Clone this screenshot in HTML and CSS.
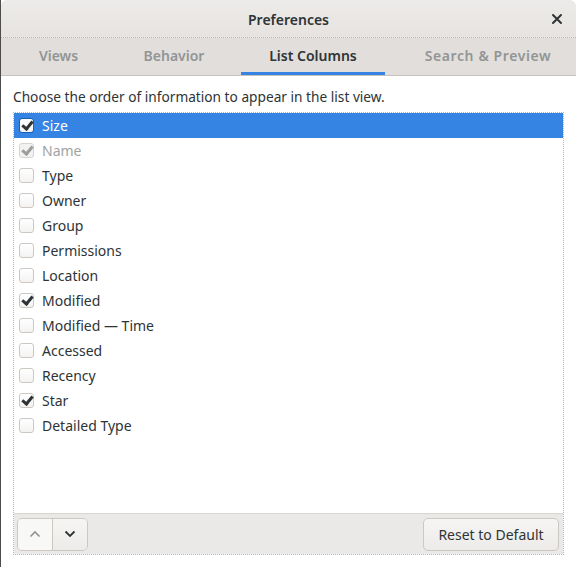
FILE: index.html
```html
<!DOCTYPE html>
<html>
<head>
<meta charset="utf-8">
<link rel="stylesheet" href="styles.css">
</head>
<body>
<div class="window">
  <div class="header">
    <div class="title">Preferences</div>
    <div class="close">
      <svg width="12" height="12" viewBox="0 0 12 12"><path d="M2 2 L10 10 M10 2 L2 10" stroke="#2e3436" stroke-width="2" stroke-linecap="round"/></svg>
    </div>
  </div>
  <div class="tabs">
    <div class="tab t1"><span>Views</span></div>
    <div class="tab t2"><span>Behavior</span></div>
    <div class="tab t3 active"><span>List Columns</span></div>
    <div class="tab t4"><span>Search &amp; Preview</span></div>
  </div>
  <div class="content">
    <div class="intro">Choose the order of information to appear in the list view.</div>
    <div class="frame">
      <div class="list">
        <div class="row selected"><span class="cb checked"></span><span>Size</span></div>
        <div class="row disabled"><span class="cb checked"></span><span>Name</span></div>
        <div class="row"><span class="cb"></span><span>Type</span></div>
        <div class="row"><span class="cb"></span><span>Owner</span></div>
        <div class="row"><span class="cb"></span><span>Group</span></div>
        <div class="row"><span class="cb"></span><span>Permissions</span></div>
        <div class="row"><span class="cb"></span><span>Location</span></div>
        <div class="row"><span class="cb checked"></span><span>Modified</span></div>
        <div class="row"><span class="cb"></span><span>Modified — Time</span></div>
        <div class="row"><span class="cb"></span><span>Accessed</span></div>
        <div class="row"><span class="cb"></span><span>Recency</span></div>
        <div class="row"><span class="cb checked"></span><span>Star</span></div>
        <div class="row"><span class="cb"></span><span>Detailed Type</span></div>
      </div>
      <div class="toolbar">
        <div class="linked">
          <div class="btn icon up"><svg width="12" height="8" viewBox="0 0 12 8"><path d="M1.5 6.5 L6 2 L10.5 6.5" fill="none" stroke="#919494" stroke-width="1.6"/></svg></div>
          <div class="btn icon down"><svg width="12" height="8" viewBox="0 0 12 8"><path d="M1.5 1.5 L6 6 L10.5 1.5" fill="none" stroke="#2e3436" stroke-width="1.8"/></svg></div>
        </div>
        <div class="btn reset">Reset to Default</div>
      </div>
    </div>
  </div>
</div>
</body>
</html>
```
FILE: styles.css
```css
html, body {
  margin: 0;
  padding: 0;
  background: #ffffff;
}
body {
  font-family: "Noto Sans", "DejaVu Sans", sans-serif;
  font-size: 14px;
  color: #2e3436;
  width: 576px;
  height: 567px;
  overflow: hidden;
}
.window {
  height: 567px;
  border-left: 1px solid #4d4d4d;
  box-sizing: border-box;
  display: flex;
  flex-direction: column;
}
.header {
  height: 38px;
  padding-top: 1px;
  box-sizing: border-box;
  background: linear-gradient(#edebe9, #e6e3e0);
  border-bottom: 1px dotted #bfb8b1;
  border-radius: 6px 6px 0 0;
  display: flex;
  align-items: center;
  justify-content: center;
  position: relative;
  flex: none;
}
.title {
  font-weight: 600;
  font-size: 14px;
  color: #2e3436;
}
.close {
  position: absolute;
  right: 13px;
  top: 13px;
  width: 12px;
  height: 12px;
  display: flex;
}
.tabs {
  height: 38px;
  padding-top: 1px;
  box-sizing: border-box;
  background: #e1dedb;
  border-bottom: 1px solid #c6c2bd;
  display: flex;
  flex: none;
}
.tab {
  display: flex;
  justify-content: center;
  font-weight: 600;
  font-size: 14px;
  color: #929595;
  flex: none;
}
.tab span {
  display: flex;
  align-items: center;
  justify-content: center;
  flex: 1;
  box-sizing: border-box;
  border-bottom: 3px solid transparent;
}
.t1 { width: 115px; }
.t2 { width: 116px; }
.t3 { width: 162px; }
.t4 { flex: 1; padding-left: 6px; letter-spacing: 0.6px; }
.t3 span { margin: 0 9px; }
.tab.active { color: #2e3436; }
.tab.active span { border-bottom-color: #3584e4; }
.content {
  flex: 1;
  padding: 11px 12px 0 12px;
  display: flex;
  flex-direction: column;
}
.intro {
  font-size: 13.7px;
  height: 19px;
  line-height: 19px;
  margin-bottom: 6px;
}
.frame {
  border: 1px dotted #b8b4af;
  height: 443px;
  display: flex;
  flex-direction: column;
  box-sizing: border-box;
}
.list {
  flex: 1;
  background: #ffffff;
}
.row {
  height: 25px;
  display: flex;
  align-items: center;
  gap: 8px;
  padding-left: 5px;
  padding-bottom: 1px;
  box-sizing: border-box;
  font-size: 14px;
}
.row.selected {
  background: #3584e4;
  color: #ffffff;
}
.row.disabled { color: #a0a3a3; }
.cb {
  width: 15px;
  height: 15px;
  box-sizing: border-box;
  border: 1px solid #cdc7c2;
  border-radius: 3px;
  background: linear-gradient(#ffffff, #f4f3f2);
  position: relative;
  flex: none;
}
.cb.checked::after {
  content: "";
  position: absolute;
  left: 4px;
  top: 0px;
  width: 4px;
  height: 8px;
  border-right: 3px solid #2e3436;
  border-bottom: 3px solid #2e3436;
  transform: rotate(40deg);
}
.row.selected .cb { border-color: #1b5fb3; }
.row.disabled .cb { background: #f3f2f1; border-color: #d8d4d0; }
.row.disabled .cb.checked::after { border-color: #9c9e9e; }
.toolbar {
  height: 41px;
  background: #ebe9e7;
  border-top: 1px solid #d9d5d1;
  box-sizing: border-box;
  display: flex;
  align-items: center;
  justify-content: space-between;
  padding: 0 4px 0 3px;
  flex: none;
}
.linked {
  display: flex;
  border: 1px solid #cdc7c2;
  border-radius: 5px;
  overflow: hidden;
}
.btn {
  height: 31px;
  display: flex;
  align-items: center;
  justify-content: center;
  background: linear-gradient(#f6f5f4, #edebe9);
  color: #2e3436;
  font-size: 14px;
}
.btn.icon { width: 34px; }
.btn.up { border-right: 1px solid #cdc7c2; background: #f8f8f7; }
.reset {
  border: 1px solid #cdc7c2;
  border-radius: 5px;
  width: 136px;
  box-sizing: border-box;
  height: 33px;
}
```
